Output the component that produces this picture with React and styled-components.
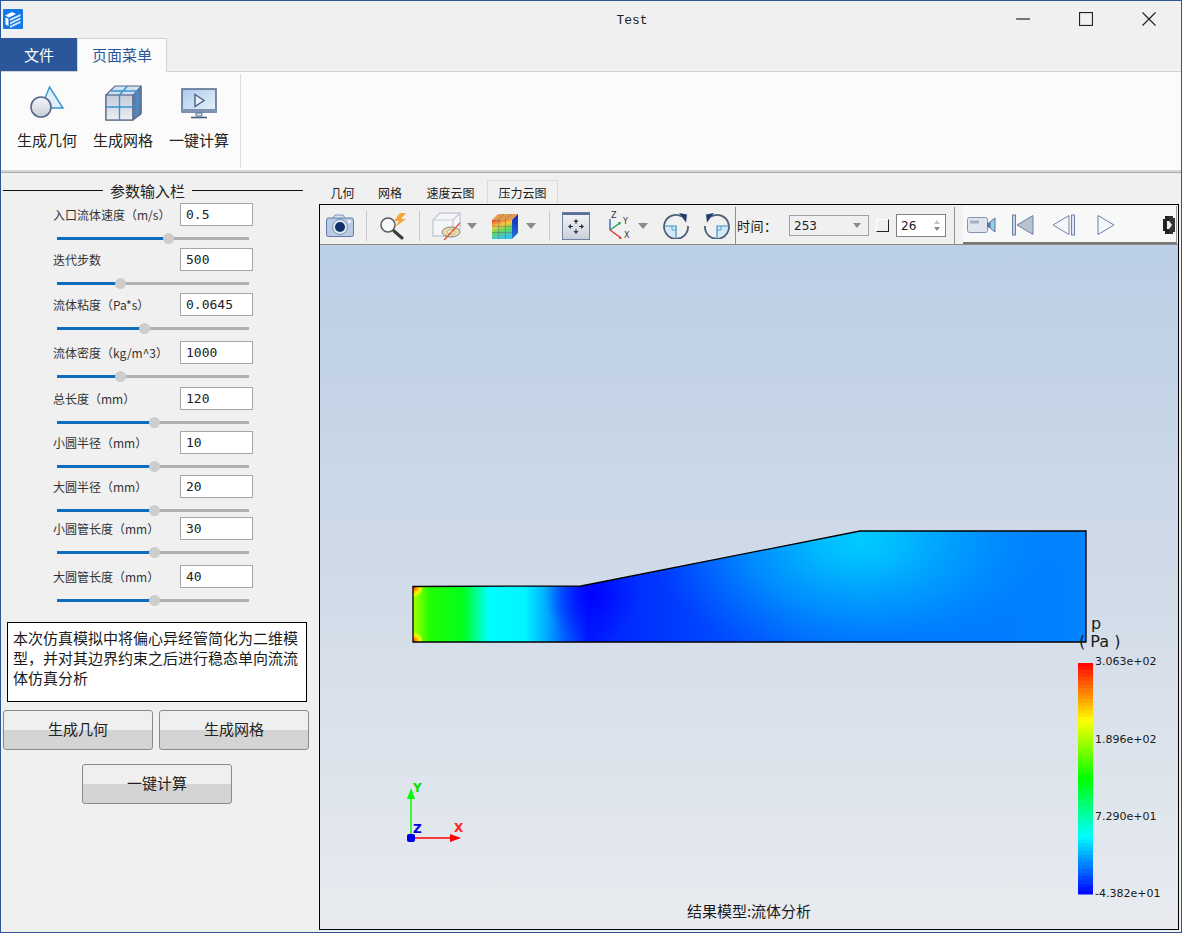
import React from 'react';
import styled, { createGlobalStyle } from 'styled-components';

const CJK = '"Noto Sans CJK SC", "Noto Sans", sans-serif';

const GlobalStyle = createGlobalStyle`
	html, body {
		margin: 0;
		padding: 0;
		height: 100%;
		overflow: hidden;
		background: #f0f0f0;
	}
	body {
		font-family: ${CJK};
		color: #1a1a1a;
	}
	* {
		box-sizing: border-box;
	}
`;

const Window = styled.div`
	width: 1182px;
	height: 933px;
	border: 1px solid #2b579a;
	display: flex;
	flex-direction: column;
	background: #f0f0f0;
`;

const TitleBar = styled.div`
	height: 37px;
	flex: none;
	display: flex;
	align-items: center;
	position: relative;
	padding: 0 0 1px 2px;
`;

const Title = styled.div`
	position: absolute;
	left: 0;
	right: 0;
	top: 12px;
	padding-left: 82px;
	text-align: center;
	font-family: 'Liberation Mono', monospace;
	font-size: 13px;
	line-height: 16px;
	color: #222;
`;

const WindowControls = styled.div`
	margin-left: auto;
	margin-right: 1px;
	display: flex;
	align-items: center;
	height: 100%;
`;

const WindowButton = styled.div`
	width: 63px;
	height: 100%;
	display: flex;
	align-items: center;
	justify-content: center;
`;

const TabBar = styled.div`
	height: 34px;
	flex: none;
	display: flex;
	border-bottom: 1px solid #d2d2d2;
`;

const FileTab = styled.div`
	width: 76px;
	height: 33px;
	background: #2b579a;
	color: #fff;
	font-size: 15px;
	display: flex;
	align-items: center;
	justify-content: center;
	padding-bottom: 1px;
`;

const PageTab = styled.div`
	width: 90px;
	height: 34px;
	background: #fbfbfb;
	color: #2b579a;
	font-size: 15px;
	display: flex;
	align-items: center;
	justify-content: center;
	border: 1px solid #d2d2d2;
	border-bottom: none;
	padding-bottom: 3px;
`;

const Ribbon = styled.div`
	height: 100px;
	flex: none;
	background: #fbfbfb;
	border-bottom: 2px solid #d6d6d6;
	display: flex;
	padding-top: 2px;
`;

const RibbonGroup = styled.div`
	width: 240px;
	height: 94px;
	border-right: 1px solid #dcdcdc;
	display: flex;
	padding-left: 8px;
`;

const RibbonButton = styled.div`
	width: 76px;
	display: flex;
	flex-direction: column;
	align-items: center;
	font-size: 15px;
	line-height: 20px;
	color: #222;
	padding-top: 9px;
	svg {
		display: block;
		margin-bottom: 7px;
	}
`;

const Main = styled.div`
	flex: 1;
	min-height: 0;
	display: flex;
	border-top: 1px solid #a9a9a9;
`;

const SidePanel = styled.div`
	width: 318px;
	flex: none;
	padding: 7px 0 0 1px;
`;

const GroupHeading = styled.div`
	width: 300px;
	height: 20px;
	margin-left: 1px;
	display: flex;
	align-items: center;
	gap: 7px;
	font-size: 15px;
	color: #222;
	&::before {
		content: '';
		flex: none;
		width: 100px;
		height: 1px;
		background: #111;
	}
	&::after {
		content: '';
		flex: 1;
		height: 1px;
		background: #111;
	}
`;

const FieldList = styled.div`
	margin-top: 3px;
`;

const Field = styled.div`
	height: 41px;
	margin-top: ${props => props.$gap}px;
`;

const FieldRow = styled.div`
	display: flex;
	align-items: center;
	height: 23px;
	padding-left: 51px;
`;

const FieldLabel = styled.label`
	width: 127px;
	flex: none;
	font-size: 12px;
	color: #333;
	white-space: nowrap;
`;

const FieldInput = styled.input`
	width: 73px;
	height: 23px;
	border: 1px solid #a6a6a6;
	background: #fff;
	padding: 0 0 0 5px;
	font-family: 'DejaVu Sans Mono', monospace;
	font-size: 13px;
	color: #222;
	outline: none;
`;

const SliderTrack = styled.div`
	position: relative;
	width: 192px;
	height: 3px;
	margin: 11px 0 0 55px;
	background: #b0b0b0;
`;

const SliderFill = styled.div`
	height: 100%;
	background: #0f6cbd;
`;

const SliderHandle = styled.div`
	position: absolute;
	top: -4px;
	width: 11px;
	height: 11px;
	margin-left: -5px;
	border-radius: 50%;
	background: #cdcdcd;
`;

const NoteBox = styled.div`
	width: 300px;
	height: 80px;
	margin: 16px 0 0 5px;
	padding: 5px 5px 0 5px;
	border: 1px solid #000;
	background: #fff;
	font-size: 15px;
	line-height: 20px;
	color: #1a1a1a;
`;

const ButtonRow = styled.div`
	display: flex;
	justify-content: ${props => (props.$center ? 'center' : 'flex-start')};
	gap: 6px;
	margin-top: ${props => props.$top}px;
	padding-left: ${props => (props.$center ? '0' : '1px')};
	width: ${props => (props.$center ? '310px' : 'auto')};
`;

const ActionButton = styled.div`
	width: 150px;
	height: 40px;
	border: 1px solid #8a8a8a;
	border-radius: 3px;
	background: linear-gradient(#efefef 0, #efefef 50%, #d4d4d4 50%, #d4d4d4 100%);
	font-size: 15px;
	color: #222;
	display: flex;
	align-items: center;
	justify-content: center;
	padding-bottom: 3px;
`;

const ViewArea = styled.div`
	flex: 1;
	min-width: 0;
	display: flex;
	flex-direction: column;
	padding: 0 2px 2px 0;
`;

const ViewTabs = styled.div`
	height: 31px;
	flex: none;
	display: flex;
	align-items: flex-end;
`;

const ViewTab = styled.div`
	height: 24px;
	width: ${props => props.$w}px;
	font-size: 12px;
	color: #222;
	display: flex;
	align-items: center;
	justify-content: center;
	border: ${props => (props.$active ? '1px solid #d9d9d9' : 'none')};
	border-bottom: none;
`;

const ViewPanel = styled.div`
	flex: 1;
	min-height: 0;
	display: flex;
	flex-direction: column;
	border: 1px solid #000;
`;

const ToolBar = styled.div`
	height: 40px;
	flex: none;
	display: flex;
	align-items: center;
	padding-top: 2px;
	border-bottom: 1px solid #8a8a8a;
	background: #f0f0f0;
`;

const Slot = styled.div`
	flex: none;
	margin-left: ${props => props.$ml}px;
	display: flex;
	align-items: center;
	svg {
		display: block;
	}
`;

const ToolSeparator = styled.div`
	flex: none;
	width: 1px;
	height: ${props => (props.$tall ? '37px' : '30px')};
	margin-left: ${props => props.$ml}px;
	background: ${props => (props.$tall ? '#8f8f8f' : '#c8c8c8')};
`;

const TimeLabel = styled.div`
	flex: none;
	width: 38px;
	margin-left: 1px;
	font-size: 13px;
	letter-spacing: 0.5px;
	color: #111;
	white-space: nowrap;
`;

const Combo = styled.div`
	flex: none;
	width: 80px;
	height: 21px;
	margin-left: 14px;
	border: 1px solid #a0a0a0;
	display: flex;
	align-items: center;
	justify-content: space-between;
	padding: 0 7px 0 4px;
	font-family: 'DejaVu Sans', sans-serif;
	font-size: 12px;
	color: #222;
`;

const ComboArrow = styled.div`
	width: 0;
	height: 0;
	border-left: 4px solid transparent;
	border-right: 4px solid transparent;
	border-top: 5px solid #8a8a8a;
`;

const CheckBox = styled.div`
	flex: none;
	width: 13px;
	height: 13px;
	margin-left: 7px;
	border-top: 1px solid #fff;
	border-left: 1px solid #fff;
	border-right: 1px solid #222;
	border-bottom: 1px solid #222;
`;

const SpinBox = styled.div`
	flex: none;
	width: 50px;
	height: 23px;
	margin-left: 7px;
	border: 1px solid #808080;
	background: #fff;
	display: flex;
	align-items: center;
	justify-content: space-between;
	padding: 0 5px 0 4px;
	font-family: 'DejaVu Sans', sans-serif;
	font-size: 12px;
	color: #222;
`;

const SpinArrows = styled.div`
	display: flex;
	flex-direction: column;
	gap: 3px;
	&::before,
	&::after {
		content: '';
		width: 0;
		height: 0;
		border-left: 3px solid transparent;
		border-right: 3px solid transparent;
	}
	&::before {
		border-bottom: 4px solid #c4c4c4;
	}
	&::after {
		border-top: 4px solid #8a8a8a;
	}
`;

const PlayerBar = styled.div`
	flex: 1;
	height: 38px;
	margin: -1px 1px 0 8px;
	background: #f8f8f8;
	border-bottom: 2px solid #777;
	border-right: 1px solid #999;
	display: flex;
	align-items: center;
	padding-top: 2px;
`;

const Canvas = styled.div`
	flex: 1;
	min-height: 0;
	position: relative;
	overflow: hidden;
	background: linear-gradient(#bbcfe5 0%, #d0dbe8 48%, #e9ebef 100%);
`;

const PlotLayer = styled.svg`
	position: absolute;
	left: 0;
	top: 0;
	width: 858px;
	height: 684px;
`;

const LegendTick = styled.div`
	position: absolute;
	left: 775px;
	top: ${props => props.$top}px;
	font-family: 'DejaVu Sans', sans-serif;
	font-size: 11px;
	line-height: 14px;
	color: #1a1a1a;
	white-space: nowrap;
`;

const LegendTitle = styled.div`
	position: absolute;
	left: ${props => props.$left}px;
	top: ${props => props.$top}px;
	font-family: 'DejaVu Sans', sans-serif;
	font-size: 16px;
	line-height: 14px;
	color: #1a1a1a;
	white-space: pre;
`;

const ResultCaption = styled.div`
	position: absolute;
	left: 0;
	right: 0;
	bottom: 8px;
	text-align: center;
	font-size: 15px;
	line-height: 20px;
	color: #1a1a1a;
`;

function AppLogo() {
	return (
		<svg width="20" height="20" viewBox="0 0 20 20">
			<rect width="20" height="20" rx="1" fill="#1479e8" />
			<path d="M2 6.500L9 3l4 2-7 3.500z" fill="#fff" />
			<path d="M2.500 8.500l3 1.300v7.200l-3-1.500z" fill="#fff" />
			<path d="M7 10l5-2.500 5.500-2.500v2l-5.500 2.500-5 2.500zM7 13.500l5-2.500 5.500-2.500v2L12 13l-5 2.500zM7 17l5-2.500 5.500-2.500v2L12 16.500 7 19z" fill="#d7e9ff" />
		</svg>
	);
}

function ShapesIcon() {
	return (
		<svg width="40" height="40" viewBox="0 0 40 40">
			<defs>
				<linearGradient id="shapeFill" x1="0" y1="0" x2="0" y2="1">
					<stop offset="0" stopColor="#f4f6fa" />
					<stop offset="1" stopColor="#c9cdd8" />
				</linearGradient>
			</defs>
			<path d="M22.500 4L36 25H14z" fill="#dbeefa" stroke="#3a94d0" strokeWidth="1.400" />
			<circle cx="14" cy="24" r="10" fill="url(#shapeFill)" stroke="#56668a" strokeWidth="1.600" />
		</svg>
	);
}

function MeshIcon() {
	return (
		<svg width="40" height="40" viewBox="0 0 40 40">
			<defs>
				<linearGradient id="meshFront" x1="0" y1="0" x2="0" y2="1">
					<stop offset="0" stopColor="#c4ccd8" />
					<stop offset="1" stopColor="#eceef3" />
				</linearGradient>
			</defs>
			<path d="M3 12l9-9h26v28l-8 6H3z" fill="#cfe2f2" stroke="#56668a" strokeWidth="1.200" />
			<rect x="3" y="12" width="27" height="25" fill="url(#meshFront)" stroke="#56668a" strokeWidth="1.200" />
			<path d="M30 12l8-9v27l-8 7z" fill="#5f7ea8" stroke="#56668a" strokeWidth="1" />
			<path d="M16.500 12V37M3 24h27M30 24l8-7M34 8v25M16.500 12l8-9M8 8h26" fill="none" stroke="#3a94d0" strokeWidth="1.400" />
		</svg>
	);
}

function MonitorIcon() {
	return (
		<svg width="40" height="40" viewBox="0 0 40 40">
			<defs>
				<linearGradient id="screenFill" x1="0" y1="0" x2="1" y2="1">
					<stop offset="0" stopColor="#a9cbec" />
					<stop offset="1" stopColor="#edf2f8" />
				</linearGradient>
			</defs>
			<rect x="3" y="6" width="34" height="23" fill="url(#screenFill)" stroke="#5b6f93" strokeWidth="1.600" />
			<rect x="2.500" y="26" width="35" height="3.500" fill="#8093b3" />
			<path d="M16 11.500l9 6-9 6z" fill="#e9f1f9" stroke="#4c5f86" strokeWidth="1.400" />
			<path d="M17 30h6v3h-6z" fill="#dfe4ec" stroke="#5b6f93" strokeWidth="1" />
			<path d="M12 34.500h16" stroke="#47597c" strokeWidth="1.600" />
		</svg>
	);
}

function CameraIcon() {
	return (
		<svg width="28" height="24" viewBox="0 0 28 24">
			<rect x="0.500" y="4" width="27" height="18.500" rx="2" fill="#b9cce4" stroke="#5f7aa3" />
			<path d="M7 4l2-3h8l2 3z" fill="#d6e1ef" stroke="#7d93b4" />
			<circle cx="14" cy="13" r="7.500" fill="#dfe7f2" stroke="#7d93b4" />
			<circle cx="14" cy="13" r="5" fill="#12306a" />
			<rect x="22" y="6.500" width="3" height="2" fill="#fff" />
		</svg>
	);
}

function SearchBoltIcon() {
	return (
		<svg width="29" height="28" viewBox="0 0 29 28">
			<circle cx="9" cy="13" r="7" fill="#f8f9fb" stroke="#5a5a5a" strokeWidth="1.500" />
			<path d="M15 19l8 7" stroke="#3a3a3a" strokeWidth="3" strokeLinecap="round" />
			<path d="M21 1l-6 8h5l-4 6 11-8h-5l5-6z" fill="#f2a93b" />
		</svg>
	);
}

function ClipCubeIcon() {
	return (
		<svg width="29" height="30" viewBox="0 0 29 30">
			<path d="M1 9l7-7h20v16l-7 7H1z" fill="#f5f6f8" stroke="#c3cad6" strokeWidth="1.400" />
			<path d="M1 9h20v16M21 9l7-7" fill="none" stroke="#c3cad6" strokeWidth="1.200" />
			<ellipse cx="19" cy="21" rx="9" ry="5" fill="#ecd9a8" stroke="#7d8795" />
			<ellipse cx="19" cy="21" rx="4" ry="2.200" fill="#f6ecd0" stroke="#a9a285" strokeWidth="0.700" />
			<path d="M12 29L28 12" stroke="#d9532c" strokeWidth="1.200" />
		</svg>
	);
}

function ColorCubeIcon() {
	return (
		<svg width="28" height="28" viewBox="0 0 28 28">
			<defs>
				<linearGradient id="cubeFront" x1="0" y1="0" x2="0.300" y2="1">
					<stop offset="0" stopColor="#e8402e" />
					<stop offset="0.350" stopColor="#f6cb3c" />
					<stop offset="0.650" stopColor="#62d860" />
					<stop offset="1" stopColor="#38c4e6" />
				</linearGradient>
				<linearGradient id="cubeSide" x1="0" y1="0" x2="0" y2="1">
					<stop offset="0" stopColor="#1428b8" />
					<stop offset="1" stopColor="#1d78d8" />
				</linearGradient>
			</defs>
			<path d="M1 8l6-6h20l-6 6z" fill="#e49a4a" />
			<rect x="1" y="8" width="20" height="19" fill="url(#cubeFront)" />
			<path d="M21 8l6-6v19l-6 6z" fill="url(#cubeSide)" />
			<path d="M7.700 8v19M14.400 8v19M1 14.300h20M1 20.600h20M7 8l6-6M14 8l6-6" stroke="#5c6670" strokeWidth="0.500" fill="none" />
		</svg>
	);
}

function DropArrow() {
	return (
		<svg width="10" height="6" viewBox="0 0 10 6">
			<path d="M0 0h10L5 6z" fill="#8a8a8a" />
		</svg>
	);
}

function FitViewIcon() {
	return (
		<svg width="28" height="28" viewBox="0 0 28 28">
			<defs>
				<linearGradient id="fitFill" x1="0" y1="0" x2="0" y2="1">
					<stop offset="0" stopColor="#f4f5f8" />
					<stop offset="1" stopColor="#c9cfda" />
				</linearGradient>
			</defs>
			<rect x="0.500" y="0.500" width="27" height="27" fill="url(#fitFill)" stroke="#6f82a3" />
			<rect x="0.500" y="0.500" width="27" height="2.500" fill="#5a7097" />
			<path d="M14 10v2M14 17v2M9 14.500h2M17 14.500h2" stroke="#333" strokeWidth="1" />
			<path d="M14 7l-2.500 3h5zM14 22l-2.500-3h5zM6 14.500l3-2.500v5zM22 14.500l-3-2.500v5z" fill="#2b3a52" />
		</svg>
	);
}

function AxesIcon() {
	return (
		<svg width="26" height="30" viewBox="0 0 26 30" fontFamily="'DejaVu Sans', sans-serif" fontSize="8">
			<text x="5" y="7" fill="#333">Z</text>
			<text x="17" y="13" fill="#333">Y</text>
			<text x="18" y="27" fill="#333">X</text>
			<path d="M4 8v11" stroke="#2a6fc0" strokeWidth="1.400" />
			<path d="M4 19l10-7" stroke="#2aa04a" strokeWidth="1.400" />
			<path d="M12 11l3 0-1 3z" fill="#2aa04a" />
			<path d="M4 19l11 8" stroke="#e0393a" strokeWidth="1.400" />
			<path d="M16 28l-3.500-.5 1.500-2.500z" fill="#e0393a" />
		</svg>
	);
}

function RotateIcon({ flip }) {
	return (
		<svg width="26" height="26" viewBox="0 0 26 26" style={flip ? { transform: 'scaleX(-1)' } : undefined}>
			<path d="M13 13H1a12 12 0 0 0 12 12z" fill="#d5e8f6" />
			<path d="M19 3.500A12 12 0 1 0 25 13" fill="none" stroke="#4d6078" strokeWidth="1.800" />
			<path d="M1 13h12v12" fill="none" stroke="#3d8fc8" strokeWidth="1.200" />
			<path d="M9 13v4h4" fill="none" stroke="#3d8fc8" strokeWidth="0.800" />
			<path d="M16 0l8 1.500-1 8z" fill="#1f3f6e" />
		</svg>
	);
}

function RecorderIcon() {
	return (
		<svg width="30" height="18" viewBox="0 0 30 18">
			<rect x="0.500" y="1.500" width="20" height="15" rx="2" fill="#dfe4ee" stroke="#8294b3" />
			<rect x="3" y="4.500" width="9" height="3" fill="#a6b0c2" />
			<path d="M20 7l3-1v6l-3-1z" fill="#5d7398" />
			<path d="M23 6l5-4v14l-5-4z" fill="#8fd0ea" stroke="#5d7398" />
		</svg>
	);
}

function PlayerIcon({ kind }) {
	const stroke = '#6d83a8';
	if (kind === 'first') {
		return (
			<svg width="22" height="22" viewBox="0 0 22 22">
				<rect x="0.500" y="1" width="3" height="20" fill="#c7d0de" stroke={stroke} />
				<path d="M21 1.500v19L5 11z" fill="#b9c2cf" stroke={stroke} />
			</svg>
		);
	}
	if (kind === 'prev') {
		return (
			<svg width="24" height="22" viewBox="0 0 24 22">
				<path d="M17 1.500v19L1 11z" fill="#f4f6f9" stroke={stroke} />
				<rect x="19.500" y="1" width="3" height="20" fill="#dfe4ec" stroke={stroke} />
			</svg>
		);
	}
	if (kind === 'next') {
		return (
			<svg width="18" height="22" viewBox="0 0 18 22">
				<path d="M1 1.500v19L17 11z" fill="#f4f6f9" stroke={stroke} />
			</svg>
		);
	}
	return (
		<svg width="12" height="18" viewBox="0 0 12 18">
			<path d="M0 3h2V0h4v5H4v8h2v5H2v-3H0z" fill="#222" />
			<path d="M6 0h4v2h2v14h-2v2H6v-5l3-4-3-4z" fill="#333" />
			<path d="M4 6l4 3-4 3z" fill="#e8e8e8" />
		</svg>
	);
}

const fields = [
	{ label: '入口流体速度（m/s）', value: '0.5', pct: 57.8, gap: 0 },
	{ label: '迭代步数', value: '500', pct: 32.8, gap: 4 },
	{ label: '流体粘度（Pa*s）', value: '0.0645', pct: 45.3, gap: 4 },
	{ label: '流体密度（kg/m^3）', value: '1000', pct: 32.8, gap: 7 },
	{ label: '总长度（mm）', value: '120', pct: 50.5, gap: 5 },
	{ label: '小圆半径（mm）', value: '10', pct: 50.5, gap: 3 },
	{ label: '大圆半径（mm）', value: '20', pct: 50.5, gap: 3 },
	{ label: '小圆管长度（mm）', value: '30', pct: 50.5, gap: 1 },
	{ label: '大圆管长度（mm）', value: '40', pct: 50.5, gap: 7 },
];

const jetStops = [
	[0, 0, 255],
	[0, 255, 255],
	[0, 255, 0],
	[255, 255, 0],
	[255, 0, 0],
];

// legend colour for t in 0..1, 0 is the bottom of the bar
function jet(t) {
	const scaled = Math.min(t, 0.9999) * 4;
	const i = Math.floor(scaled);
	const f = scaled - i;
	const [a, b] = [jetStops[i], jetStops[i + 1]];
	const mix = a.map((v, k) => Math.round(v + (b[k] - v) * f));
	return `rgb(${mix.join(',')})`;
}

const BANDS = 64;
const bandHeight = 231 / BANDS;

const DUCT = 'M93 341.500L261 341L540 286H766V397H93Z';

function Plot() {
	return (
		<PlotLayer viewBox="0 0 858 684">
			<defs>
				<linearGradient id="ductBase" gradientUnits="userSpaceOnUse" x1="93" y1="0" x2="766" y2="0">
					<stop offset="0" stopColor="#a8ff00" />
					<stop offset="0.025" stopColor="#20ff00" />
					<stop offset="0.075" stopColor="#00ff20" />
					<stop offset="0.113" stopColor="#00ffff" />
					<stop offset="0.166" stopColor="#00f4ff" />
					<stop offset="0.2" stopColor="#00a8ff" />
					<stop offset="0.225" stopColor="#0060ff" />
					<stop offset="0.26" stopColor="#0018ff" />
					<stop offset="0.3" stopColor="#0028ff" />
					<stop offset="0.45" stopColor="#0048ff" />
					<stop offset="0.6" stopColor="#0066ff" />
					<stop offset="0.8" stopColor="#0078ff" />
					<stop offset="1" stopColor="#0084ff" />
				</linearGradient>
				<radialGradient id="ductBulge" gradientUnits="userSpaceOnUse" cx="540" cy="295" r="210" gradientTransform="translate(540 295) scale(1 0.62) translate(-540 -295)">
					<stop offset="0" stopColor="#00ccff" />
					<stop offset="0.22" stopColor="#00b8ff" />
					<stop offset="0.55" stopColor="#00a0ff" stopOpacity="0.7" />
					<stop offset="1" stopColor="#0080ff" stopOpacity="0" />
				</radialGradient>
				<radialGradient id="ductThroat" gradientUnits="userSpaceOnUse" cx="272" cy="350" r="48">
					<stop offset="0" stopColor="#0000ff" stopOpacity="0.9" />
					<stop offset="0.5" stopColor="#0000ff" stopOpacity="0.4" />
					<stop offset="1" stopColor="#0000ff" stopOpacity="0" />
				</radialGradient>
				<radialGradient id="ductCorner">
					<stop offset="0" stopColor="#ff3000" />
					<stop offset="0.4" stopColor="#ffb000" />
					<stop offset="0.7" stopColor="#f0ff00" />
					<stop offset="1" stopColor="#a0ff00" stopOpacity="0" />
				</radialGradient>
				<clipPath id="ductClip">
					<path d={DUCT} />
				</clipPath>
			</defs>
			<g clipPath="url(#ductClip)">
				<rect x="93" y="280" width="673" height="120" fill="url(#ductBase)" />
				<rect x="93" y="280" width="673" height="120" fill="url(#ductThroat)" />
				<rect x="93" y="280" width="673" height="120" fill="url(#ductBulge)" />
				<circle cx="93" cy="342" r="11" fill="url(#ductCorner)" />
				<circle cx="93" cy="397" r="11" fill="url(#ductCorner)" />
			</g>
			<path d={DUCT} fill="none" stroke="#000" strokeWidth="1.300" />

			{Array.from({ length: BANDS }, (_, i) => (
				<rect
					key={i}
					x="758"
					y={418 + i * bandHeight}
					width="15"
					height={bandHeight + 0.5}
					fill={jet(1 - (i + 0.5) / BANDS)}
				/>
			))}

			<g fontFamily="'DejaVu Sans', sans-serif" fontWeight="700" fontSize="12">
				<path d="M91 593V548" stroke="#00ff00" strokeWidth="1.500" />
				<path d="M91 543l-4 11h8z" fill="#00ff00" />
				<text x="93" y="547" fill="#00e000">Y</text>
				<path d="M91 593h45" stroke="#ff0000" strokeWidth="1.500" />
				<path d="M141 593l-11-4v8z" fill="#ff0000" />
				<text x="134" y="587" fill="#ff2020">X</text>
				<rect x="87" y="589" width="8" height="8" rx="2" fill="#0000e8" />
				<text x="93" y="588" fill="#0000e0">Z</text>
			</g>
		</PlotLayer>
	);
}

export default function App() {
	return (
		<Window>
			<GlobalStyle />
			<TitleBar>
				<AppLogo />
				<Title>Test</Title>
				<WindowControls>
					<WindowButton>
						<svg width="14" height="14" viewBox="0 0 14 14">
							<path d="M0 7h14" stroke="#222" strokeWidth="1.200" />
						</svg>
					</WindowButton>
					<WindowButton>
						<svg width="14" height="14" viewBox="0 0 14 14">
							<rect x="0.500" y="0.500" width="13" height="13" fill="none" stroke="#222" strokeWidth="1.200" />
						</svg>
					</WindowButton>
					<WindowButton>
						<svg width="14" height="14" viewBox="0 0 14 14">
							<path d="M0.500 0.500l13 13M13.500 0.500l-13 13" stroke="#222" strokeWidth="1.200" />
						</svg>
					</WindowButton>
				</WindowControls>
			</TitleBar>

			<TabBar>
				<FileTab>文件</FileTab>
				<PageTab>页面菜单</PageTab>
			</TabBar>

			<Ribbon>
				<RibbonGroup>
					<RibbonButton>
						<ShapesIcon />
						生成几何
					</RibbonButton>
					<RibbonButton>
						<MeshIcon />
						生成网格
					</RibbonButton>
					<RibbonButton>
						<MonitorIcon />
						一键计算
					</RibbonButton>
				</RibbonGroup>
			</Ribbon>

			<Main>
				<SidePanel>
					<GroupHeading>参数输入栏</GroupHeading>
					<FieldList>
						{fields.map(field => (
							<Field key={field.label} $gap={field.gap}>
								<FieldRow>
									<FieldLabel>{field.label}</FieldLabel>
									<FieldInput value={field.value} readOnly />
								</FieldRow>
								<SliderTrack>
									<SliderFill style={{ width: `${field.pct}%` }} />
									<SliderHandle style={{ left: `${field.pct}%` }} />
								</SliderTrack>
							</Field>
						))}
					</FieldList>
					<NoteBox>本次仿真模拟中将偏心异经管简化为二维模型，并对其边界约束之后进行稳态单向流流体仿真分析</NoteBox>
					<ButtonRow $top={8}>
						<ActionButton>生成几何</ActionButton>
						<ActionButton>生成网格</ActionButton>
					</ButtonRow>
					<ButtonRow $top={14} $center>
						<ActionButton>一键计算</ActionButton>
					</ButtonRow>
				</SidePanel>

				<ViewArea>
					<ViewTabs>
						<ViewTab $w={47}>几何</ViewTab>
						<ViewTab $w={48}>网格</ViewTab>
						<ViewTab $w={73}>速度云图</ViewTab>
						<ViewTab $w={71} $active>压力云图</ViewTab>
					</ViewTabs>
					<ViewPanel>
						<ToolBar>
							<Slot $ml={6}><CameraIcon /></Slot>
							<ToolSeparator $ml={12} />
							<Slot $ml={12}><SearchBoltIcon /></Slot>
							<ToolSeparator $ml={11} />
							<Slot $ml={12}><ClipCubeIcon /></Slot>
							<Slot $ml={6}><DropArrow /></Slot>
							<Slot $ml={14}><ColorCubeIcon /></Slot>
							<Slot $ml={7}><DropArrow /></Slot>
							<ToolSeparator $ml={13} />
							<Slot $ml={12}><FitViewIcon /></Slot>
							<Slot $ml={16}><AxesIcon /></Slot>
							<Slot $ml={6}><DropArrow /></Slot>
							<Slot $ml={15}><RotateIcon /></Slot>
							<Slot $ml={15}><RotateIcon flip /></Slot>
							<ToolSeparator $ml={5} $tall />
							<TimeLabel>时间：</TimeLabel>
							<Combo>
								253
								<ComboArrow />
							</Combo>
							<CheckBox />
							<SpinBox>
								26
								<SpinArrows />
							</SpinBox>
							<ToolSeparator $ml={8} $tall />
							<PlayerBar>
								<Slot $ml={4}><RecorderIcon /></Slot>
								<Slot $ml={15}><PlayerIcon kind="first" /></Slot>
								<Slot $ml={18}><PlayerIcon kind="prev" /></Slot>
								<Slot $ml={21}><PlayerIcon kind="next" /></Slot>
								<Slot $ml={48}><PlayerIcon kind="end" /></Slot>
							</PlayerBar>
						</ToolBar>
						<Canvas>
							<Plot />
							<LegendTitle $left={771} $top={372}>p</LegendTitle>
							<LegendTitle $left={759} $top={390}>( Pa )</LegendTitle>
							<LegendTick $top={410}>3.063e+02</LegendTick>
							<LegendTick $top={488}>1.896e+02</LegendTick>
							<LegendTick $top={565}>7.290e+01</LegendTick>
							<LegendTick $top={642}>-4.382e+01</LegendTick>
							<ResultCaption>结果模型:流体分析</ResultCaption>
						</Canvas>
					</ViewPanel>
				</ViewArea>
			</Main>
		</Window>
	);
}
